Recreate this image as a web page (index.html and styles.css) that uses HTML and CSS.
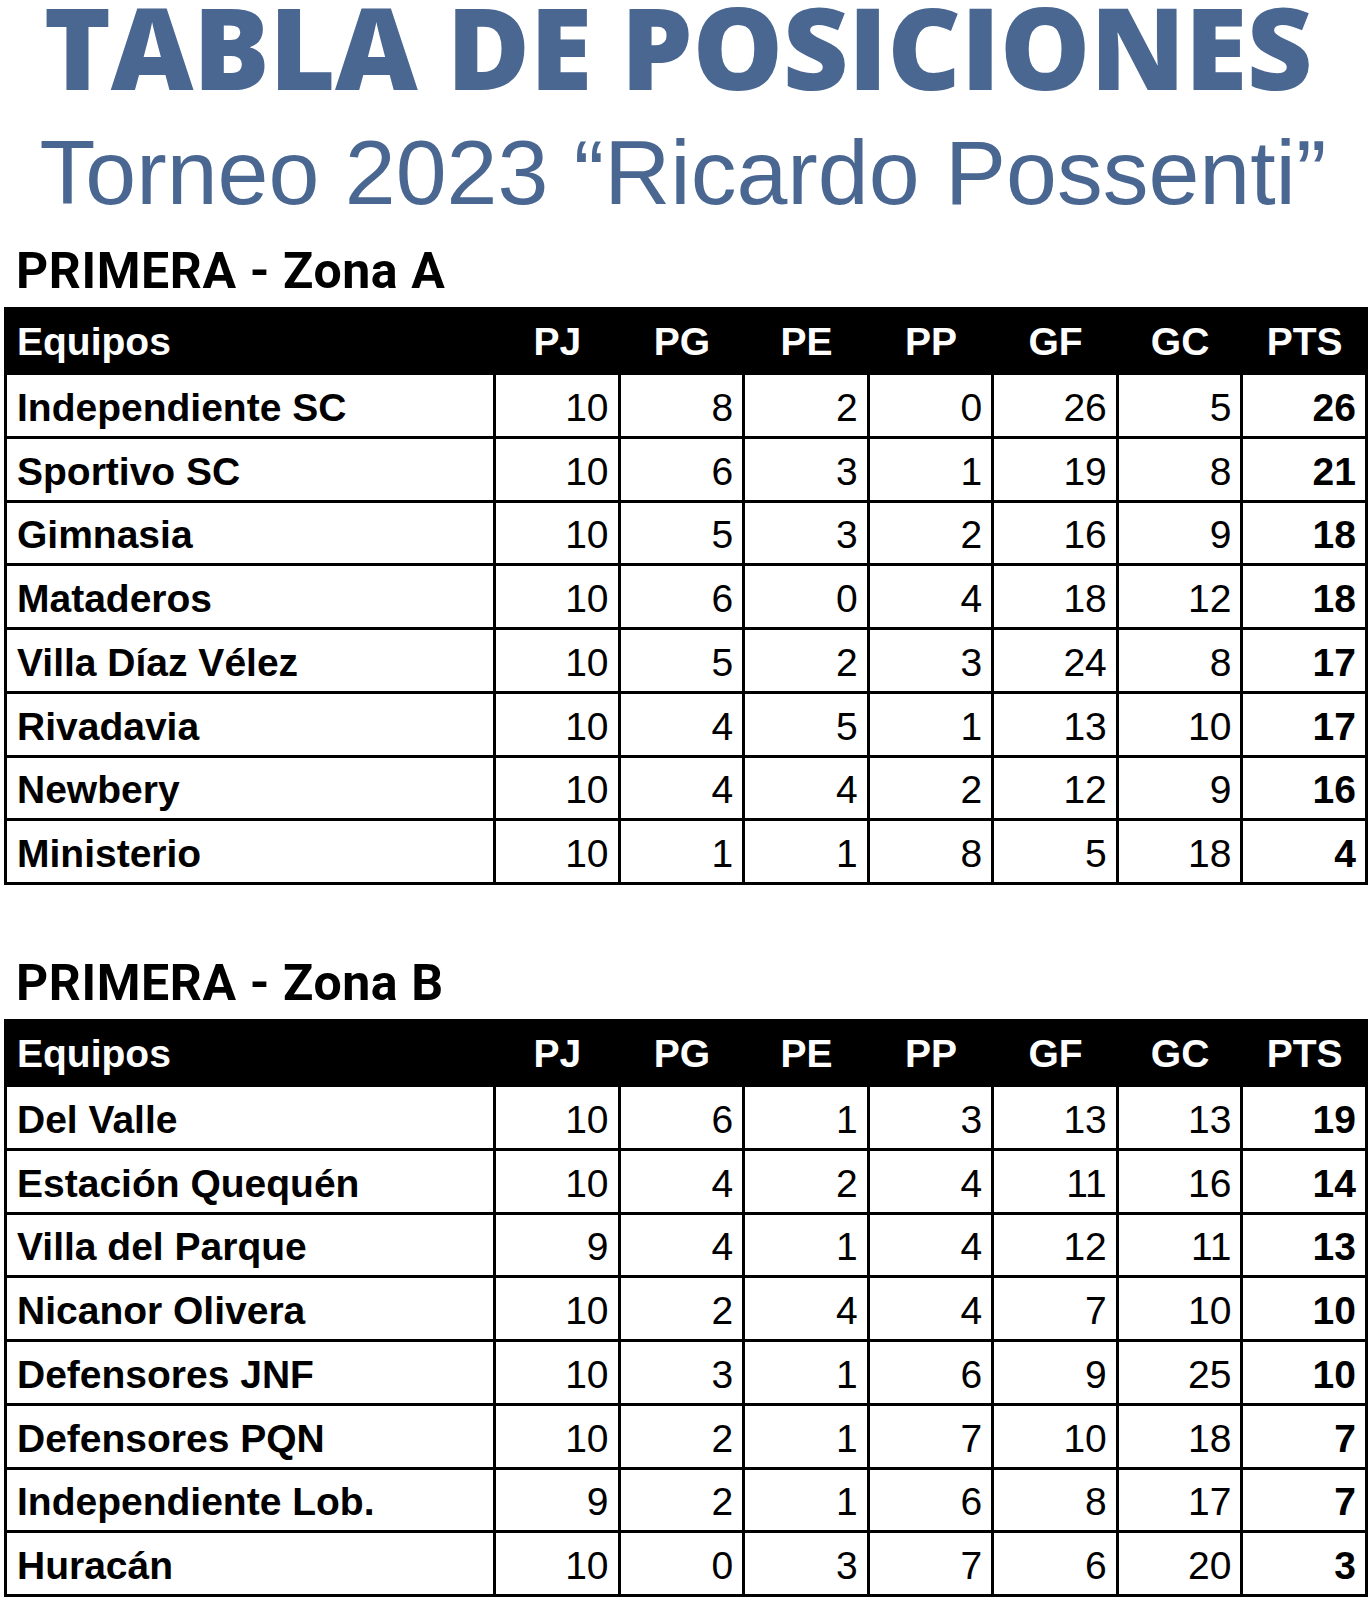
FILE: index.html
```html
<!DOCTYPE html>
<html lang="es">
<head>
<meta charset="utf-8">
<title>Tabla de Posiciones</title>
<link rel="stylesheet" href="styles.css">
</head>
<body>
<header class="hero">
  <h1 class="title">TABLA DE POSICIONES</h1>
  <p class="subtitle">Torneo 2023 “Ricardo Possenti”</p>
</header>

<section class="zone">
  <h2 class="zone-title">PRIMERA - Zona A</h2>
  <table class="standings">
    <thead>
      <tr><th class="team">Equipos</th><th>PJ</th><th>PG</th><th>PE</th><th>PP</th><th>GF</th><th>GC</th><th>PTS</th></tr>
    </thead>
    <tbody>
      <tr><td class="team">Independiente SC</td><td>10</td><td>8</td><td>2</td><td>0</td><td>26</td><td>5</td><td class="pts">26</td></tr>
      <tr><td class="team">Sportivo SC</td><td>10</td><td>6</td><td>3</td><td>1</td><td>19</td><td>8</td><td class="pts">21</td></tr>
      <tr><td class="team">Gimnasia</td><td>10</td><td>5</td><td>3</td><td>2</td><td>16</td><td>9</td><td class="pts">18</td></tr>
      <tr><td class="team">Mataderos</td><td>10</td><td>6</td><td>0</td><td>4</td><td>18</td><td>12</td><td class="pts">18</td></tr>
      <tr><td class="team">Villa Díaz Vélez</td><td>10</td><td>5</td><td>2</td><td>3</td><td>24</td><td>8</td><td class="pts">17</td></tr>
      <tr><td class="team">Rivadavia</td><td>10</td><td>4</td><td>5</td><td>1</td><td>13</td><td>10</td><td class="pts">17</td></tr>
      <tr><td class="team">Newbery</td><td>10</td><td>4</td><td>4</td><td>2</td><td>12</td><td>9</td><td class="pts">16</td></tr>
      <tr><td class="team">Ministerio</td><td>10</td><td>1</td><td>1</td><td>8</td><td>5</td><td>18</td><td class="pts">4</td></tr>
    </tbody>
  </table>
</section>

<section class="zone zone-b">
  <h2 class="zone-title">PRIMERA - Zona B</h2>
  <table class="standings">
    <thead>
      <tr><th class="team">Equipos</th><th>PJ</th><th>PG</th><th>PE</th><th>PP</th><th>GF</th><th>GC</th><th>PTS</th></tr>
    </thead>
    <tbody>
      <tr><td class="team">Del Valle</td><td>10</td><td>6</td><td>1</td><td>3</td><td>13</td><td>13</td><td class="pts">19</td></tr>
      <tr><td class="team">Estación Quequén</td><td>10</td><td>4</td><td>2</td><td>4</td><td>11</td><td>16</td><td class="pts">14</td></tr>
      <tr><td class="team">Villa del Parque</td><td>9</td><td>4</td><td>1</td><td>4</td><td>12</td><td>11</td><td class="pts">13</td></tr>
      <tr><td class="team">Nicanor Olivera</td><td>10</td><td>2</td><td>4</td><td>4</td><td>7</td><td>10</td><td class="pts">10</td></tr>
      <tr><td class="team">Defensores JNF</td><td>10</td><td>3</td><td>1</td><td>6</td><td>9</td><td>25</td><td class="pts">10</td></tr>
      <tr><td class="team">Defensores PQN</td><td>10</td><td>2</td><td>1</td><td>7</td><td>10</td><td>18</td><td class="pts">7</td></tr>
      <tr><td class="team">Independiente Lob.</td><td>9</td><td>2</td><td>1</td><td>6</td><td>8</td><td>17</td><td class="pts">7</td></tr>
      <tr><td class="team">Huracán</td><td>10</td><td>0</td><td>3</td><td>7</td><td>6</td><td>20</td><td class="pts">3</td></tr>
    </tbody>
  </table>
</section>
</body>
</html>
```

FILE: styles.css
```css
html, body {
  margin: 0;
  padding: 0;
  background: #ffffff;
}

body {
  width: 1372px;
  font-family: "Liberation Sans", Arial, sans-serif;
  color: #000;
}

.hero {
  text-align: center;
  color: #4a6792;
}

.title {
  margin: 0;
  padding-right: 16px;
  font-family: "Open Sans", "Liberation Sans", sans-serif;
  font-weight: 800;
  font-size: 114px;
  letter-spacing: -0.5px;
  line-height: 92px;
  white-space: nowrap;
}

.subtitle {
  margin: 25px 0 0;
  padding-right: 6px;
  font-family: "Liberation Sans", Arial, sans-serif;
  font-weight: 400;
  font-size: 91.5px;
  line-height: 110px;
  white-space: nowrap;
}

.zone {
  padding: 0 4px;
}

.zone-b {
  margin-top: 62px;
}

.zone-title {
  margin: 8px 0 0;
  padding-left: 12px;
  font-family: Roboto, "Noto Sans", sans-serif;
  font-weight: 700;
  font-size: 50px;
  letter-spacing: 0.6px;
  line-height: 72px;
  color: #000;
}

.standings {
  width: 1364px;
  border-collapse: collapse;
  table-layout: fixed;
  border: 3px solid #000;
  font-size: 39px;
}

.standings th,
.standings td {
  border: 3px solid #000;
  padding: 0 9px 0 10px;
  line-height: 45px;
  white-space: nowrap;
  overflow: hidden;
}

.standings thead tr {
  height: 65px;
}

.standings th {
  background: #000;
  color: #fff;
  font-weight: 700;
  text-align: center;
  vertical-align: middle;
}

.standings th.team {
  width: 467px;
  text-align: left;
}

.standings tbody tr {
  height: 63.75px;
}

.standings td {
  padding-top: 4px;
  text-align: right;
  vertical-align: middle;
  font-weight: 400;
}

.standings td.team {
  text-align: left;
  font-weight: 700;
}

.standings td.pts {
  font-weight: 700;
}
```
